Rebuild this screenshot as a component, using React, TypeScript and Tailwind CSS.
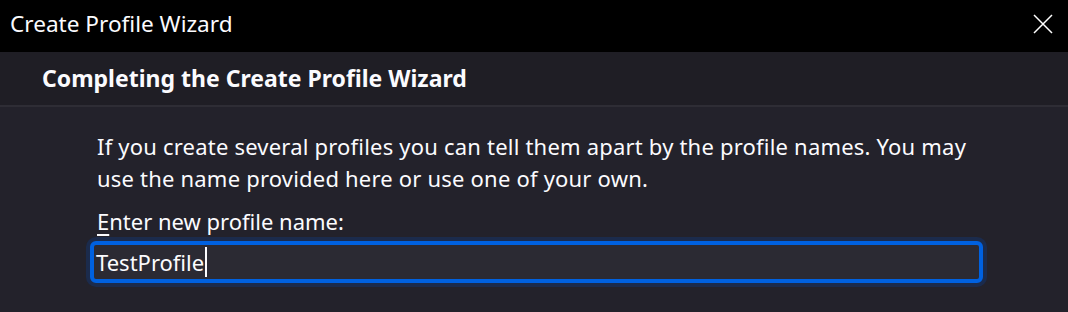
const font = { fontFamily: '"Noto Sans", "Open Sans", sans-serif' };

export default function App() {
  return (
    <div className="w-[1068px] h-[312px] bg-[#23222b] text-[#fbfbfe] flex flex-col overflow-hidden" style={font}>
      <div className="h-[52px] shrink-0 bg-black flex items-center justify-between pl-[10px] pr-[15px] pb-[6px] pt-[2px]">
        <span className="text-[22.6px] leading-none">Create Profile Wizard</span>
        <svg width="20" height="20" viewBox="0 0 20 20" className="text-white">
          <path d="M1 1 L19 19 M19 1 L1 19" stroke="currentColor" strokeWidth="1.5" fill="none" />
        </svg>
      </div>
      <div className="h-[55px] shrink-0 bg-[#1f1e25] border-b-2 border-[#2e2d35] flex items-center pl-[42px]">
        <span className="text-[23px] font-bold leading-none">Completing the Create Profile Wizard</span>
      </div>
      <div className="pl-[97px] pr-[85px] pt-[23px]">
        <p className="text-[22px] leading-[32px] tracking-[0.2px]">
          If you create several profiles you can tell them apart by the profile names. You may use the name provided here or use one of your own.
        </p>
        <label className="block text-[22px] leading-[32px] mt-[11px]">
          <span className="underline underline-offset-[4px]">E</span>nter new profile name:
        </label>
        <div className="mt-[4px] -ml-[7px] w-[893px] h-[42px] rounded-[6px] border-4 border-[#0061e0] bg-[#2b2a33] shadow-[0_0_0_4px_#1b2b4c] flex items-center pl-[2px]">
          <span className="text-[22px] leading-none">TestProfile</span>
          <span className="w-[2px] h-[30px] bg-[#fbfbfe] ml-[1px]" />
        </div>
      </div>
    </div>
  );
}
